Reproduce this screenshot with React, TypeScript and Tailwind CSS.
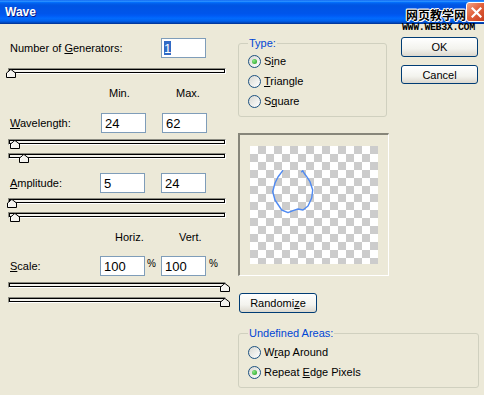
import React from "react";

const Thumb = () => (
  <svg width="10" height="9" viewBox="0 0 10 9" className="block">
    <path d="M0.5 8.5 V4 L5 0.5 L9.5 4 V8.5 Z" fill="#f4f3ee" stroke="#000" strokeWidth="1" />
    <path d="M1.5 7.5 V4.4 L5 1.6" fill="none" stroke="#fff" strokeWidth="1" />
  </svg>
);

function Slider({ pos, className = "" }: { pos: number; className?: string }) {
  return (
    <div
      className={`relative w-[218px] h-[6px] border border-t-[#8a8a80] border-l-[#8a8a80] border-b-white border-r-white ${className}`}
    >
      <div className="h-full border border-black bg-[#f4f3ee]" />
      <div className="absolute top-0" style={{ left: pos }}>
        <Thumb />
      </div>
    </div>
  );
}

function Field({ value, selected = false }: { value: string; selected?: boolean }) {
  return (
    <div className="w-[45px] h-[20px] shrink-0 border border-[#7f9db9] bg-white flex items-center pl-[2px] text-[13px] leading-none">
      {selected ? (
        <span className="bg-[#316ac5] text-white h-[14px] flex items-center">{value}</span>
      ) : (
        <span className="pl-[1px]">{value}</span>
      )}
    </div>
  );
}

function Radio({ checked = false, children }: { checked?: boolean; children: React.ReactNode }) {
  return (
    <div className="flex items-center h-[20px]">
      <div className="w-[13px] h-[13px] shrink-0 rounded-full border border-[#1c5180] bg-[linear-gradient(135deg,#d8d8d2,#ffffff)] flex items-center justify-center">
        {checked && (
          <div className="w-[5px] h-[5px] rounded-full bg-[radial-gradient(circle_at_35%_35%,#8ae885,#1c9c1c)]" />
        )}
      </div>
      <span className="ml-[3px]">{children}</span>
    </div>
  );
}

function XPButton({ children, className = "" }: { children: React.ReactNode; className?: string }) {
  return (
    <div
      className={`border border-[#003c74] rounded-[3px] bg-[linear-gradient(to_bottom,#ffffff,#f3f3ee_60%,#dcd8ce)] flex items-center justify-center ${className}`}
    >
      {children}
    </div>
  );
}

export default function App() {
  return (
    <div className="relative w-[484px] h-[395px] overflow-hidden bg-[#ece9d8] text-black text-[11px] leading-[14px] font-['Liberation_Sans',Arial,sans-serif]">
      {/* Title bar */}
      <div className="h-[24px] flex items-start justify-between overflow-hidden bg-[linear-gradient(to_bottom,#0058ee_0%,#3593ff_4%,#288eff_6%,#127dff_8%,#036ffc_10%,#0262ee_14%,#0057e5_20%,#0054e3_24%,#0055eb_56%,#005bf5_66%,#026afe_76%,#0062ef_86%,#0052d6_92%,#0040ab_96%,#003092_100%)]">
        <span className="ml-[5px] mt-[5px] text-[12px] leading-[14px] font-bold text-white [text-shadow:1px_1px_#0a1883]">
          Wave
        </span>
        <div className="mt-[2px] mr-[-3px] w-[21px] h-[20px] rounded-[3px] border border-white bg-[linear-gradient(135deg,#f2a488,#e2613c_45%,#c4391a)] flex items-center justify-center">
          <svg width="11" height="11" viewBox="0 0 11 11">
            <path d="M1.5 1.5 L9.5 9.5 M9.5 1.5 L1.5 9.5" stroke="#fff" strokeWidth="2.2" strokeLinecap="square" />
          </svg>
        </div>
      </div>

      {/* watermark overlay */}
      <span className="absolute left-[406px] top-[7px] text-[12px] leading-[15px] font-bold text-black font-['Noto_Sans_CJK_SC',sans-serif] [text-shadow:1px_0_#fff,-1px_0_#fff,0_1px_#fff,0_-1px_#fff,1px_1px_#fff,-1px_-1px_#fff]">
        网页教学网
      </span>
      <span className="absolute left-[402px] top-[23px] text-[10px] leading-[10px] tracking-[-0.4px] font-bold text-black font-['Liberation_Mono',monospace]">
        WWW.WEB3X.COM
      </span>

      {/* Body */}
      <div className="flex">
        {/* Left column */}
        <div className="ml-[8px] w-[218px] flex flex-col">
          <div className="mt-[14px] h-[20px] flex items-center">
            <span className="w-[153px] pl-[2px]">
              Number of <u>G</u>enerators:
            </span>
            <Field value="1" selected />
          </div>
          <Slider pos={-3} className="mt-[10px]" />

          <div className="mt-[12px] h-[14px] flex items-center">
            <span className="ml-[101px] w-[67px]">Min.</span>
            <span>Max.</span>
          </div>

          <div className="mt-[13px] h-[20px] flex items-center">
            <span className="w-[93px] pl-[2px]">
              <u>W</u>avelength:
            </span>
            <Field value="24" />
            <div className="w-[16px]" />
            <Field value="62" />
          </div>
          <Slider pos={1} className="mt-[6px]" />
          <Slider pos={10} className="mt-[8px]" />

          <div className="mt-[14px] h-[20px] flex items-center">
            <span className="w-[92px] pl-[2px]">
              <u>A</u>mplitude:
            </span>
            <Field value="5" />
            <div className="w-[16px]" />
            <Field value="24" />
          </div>
          <Slider pos={-2} className="mt-[5px]" />
          <Slider pos={1} className="mt-[8px]" />

          <div className="mt-[12px] h-[14px] flex items-center">
            <span className="ml-[107px] w-[64px]">Horiz.</span>
            <span>Vert.</span>
          </div>

          <div className="mt-[12px] h-[20px] flex items-center">
            <span className="w-[92px] pl-[2px]">
              <u>S</u>cale:
            </span>
            <Field value="100" />
            <div className="w-[16px] h-full pl-[2px] pt-[3px] text-[10px] leading-[10px]">%</div>
            <Field value="100" />
            <div className="h-full pl-[3px] pt-[3px] text-[10px] leading-[10px]">%</div>
          </div>
          <Slider pos={211} className="mt-[6px]" />
          <Slider pos={211} className="mt-[9px]" />
        </div>

        {/* Right area */}
        <div className="ml-[12px] w-[242px] flex flex-col">
          <div className="flex">
            {/* middle column */}
            <div className="w-[151px] flex flex-col">
              <div className="relative mt-[19px] w-[149px] border border-[#d0d0bf] rounded-[3px] pl-[9px] pt-[7px] pb-[5px]">
                <span className="absolute left-[9px] top-[-8px] px-[1px] bg-[#ece9d8] text-[#0046d5]">Type:</span>
                <Radio checked>
                  S<u>i</u>ne
                </Radio>
                <Radio>
                  <u>T</u>riangle
                </Radio>
                <Radio>
                  S<u>q</u>uare
                </Radio>
              </div>

              <div className="mt-[16px] w-[151px] h-[143px] border-t-2 border-l-2 border-b border-r border-t-[#87867a] border-l-[#87867a] border-b-white border-r-white flex items-center justify-center">
                <div className="relative w-[128px] h-[118px] bg-[conic-gradient(#cccccc_25%,#ffffff_0_50%,#cccccc_0_75%,#ffffff_0)] bg-[length:16px_16px]">
                  <svg className="absolute left-0 top-0" width="128" height="118" viewBox="0 0 128 118">
                    <polyline
                      points="32.7,24.7 28,31 25,37 22.7,45.7 25,54 31.7,64 38,66.7 43,64.7 48,63 53,64 58,60 61.7,52 62.7,44 60,35.7 56.7,30.7 54,27 52.7,24.7 51.7,25.7"
                      fill="none"
                      stroke="#4f8af2"
                      strokeWidth="1.4"
                      strokeLinejoin="round"
                      strokeLinecap="round"
                    />
                  </svg>
                </div>
              </div>

              <XPButton className="mt-[17px] ml-[1px] w-[78px] h-[20px]">
                <span>
                  Randomi<u>z</u>e
                </span>
              </XPButton>
            </div>

            {/* buttons column */}
            <div className="ml-[12px] w-[77px] flex flex-col">
              <XPButton className="mt-[13px] h-[20px]">OK</XPButton>
              <XPButton className="mt-[8px] h-[19px]">Cancel</XPButton>
            </div>
          </div>

          <div className="relative mt-[20px] w-[241px] border border-[#d0d0bf] rounded-[3px] pl-[9px] pt-[8px] pb-[5px]">
            <span className="absolute left-[9px] top-[-8px] px-[1px] bg-[#ece9d8] text-[#0046d5]">Undefined Areas:</span>
            <Radio>
              W<u>r</u>ap Around
            </Radio>
            <Radio checked>
              Repeat <u>E</u>dge Pixels
            </Radio>
          </div>
        </div>
      </div>
    </div>
  );
}
